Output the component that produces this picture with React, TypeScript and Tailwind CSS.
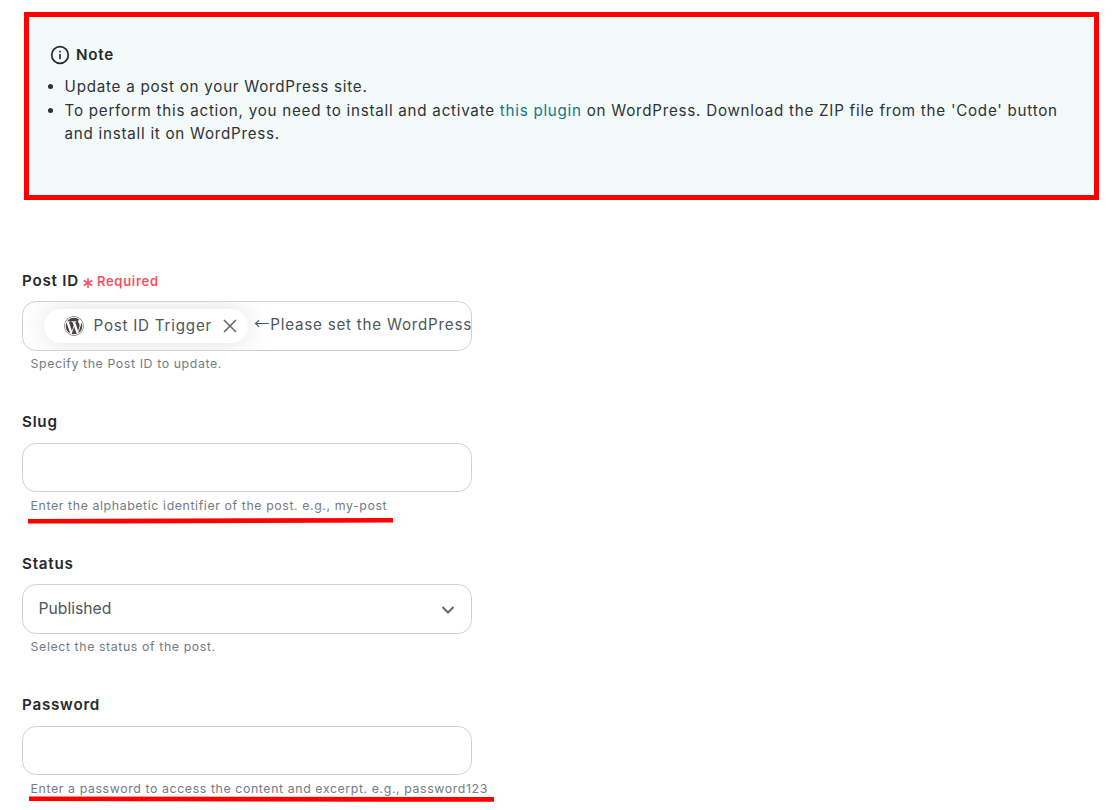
import type { ReactNode } from 'react';
import { FaWordpress } from 'react-icons/fa';

interface FieldProps {
    label: string;
    hint: string;
    required?: boolean;
    underline?: ReactNode;
    children?: ReactNode;
}

const Field: React.FC<FieldProps> = ({ label, hint, required, underline, children }) => {
    return (
        <div className="h-[141.4px]">
            <div className="flex h-6 items-center text-[15.2px] font-semibold tracking-[0.76px] text-[#27292b]">
                {label}
                {required && (
                    <span className="ml-1 flex items-center gap-1 pt-px text-[13px] tracking-[0.7px] text-[#f9515f]">
                        <svg className="mt-0.5" width="10" height="10" viewBox="0 0 10 10" stroke="currentColor" strokeWidth="1.5" aria-hidden="true">
                            <path d="M5 0v10M0.7 2.5l8.6 5M9.3 2.5l-8.6 5" />
                        </svg>
                        Required
                    </span>
                )}
            </div>
            <div className="mt-2 flex h-[49.4px] w-[450px] items-center overflow-hidden rounded-[14px] border border-[#ced2d8] bg-white text-[15.2px] text-[#50555b]">
                {children}
            </div>
            <div className="relative mt-[3.6px] w-max pl-[8.6px] text-[12.35px] leading-5 tracking-[0.595px] text-[#737b83]">
                {hint}
                {underline}
            </div>
        </div>
    );
};

const App: React.FC = () => {
    return (
        <div className="h-[810px] w-[1116px] overflow-hidden bg-white font-['Inter',sans-serif]">
            <div className="mt-3 ml-6 h-[188px] w-[1075px] border-5 border-[#ff0000] bg-white">
                <div className="h-full rounded-r-lg bg-[#f2fbfa] pt-[26px] pl-[21px] tracking-[0.737px] text-[#303234]">
                    <div className="flex h-6 items-center gap-1.5 text-[15.2px] font-semibold text-[#27292b]">
                        <svg width="20" height="20" viewBox="0 0 20 20" fill="none" stroke="currentColor" aria-hidden="true">
                            <circle cx="10" cy="10" r="8.3" strokeWidth="1.7" />
                            <path d="M10 9v5.2M10 5.8v1.6" strokeWidth="1.6" />
                        </svg>
                        Note
                    </div>
                    <ul className="mt-2 list-disc pl-[14.6px] text-[15.2px] leading-[23.6px]">
                        <li>Update a post on your WordPress site.</li>
                        <li>
                            To perform this action, you need to install and activate{' '}
                            <a className="text-[#0f768b]">this plugin</a> on WordPress. Download the ZIP file from the
                            'Code' button
                            <br />
                            and install it on WordPress.
                        </li>
                    </ul>
                </div>
            </div>

            <div className="pt-[69.35px] pl-[22px]">
                <Field label="Post ID" hint="Specify the Post ID to update." required>
                    <div className="ml-[21px] flex h-[34px] w-[204px] shrink-0 items-center rounded-full bg-white pl-[19.5px] tracking-[0.76px] shadow-[0_0_28px_rgba(0,0,0,0.12)]">
                        <FaWordpress className="size-5 shrink-0 text-[#464342]" />
                        <span className="ml-2.5 whitespace-nowrap">Post ID Trigger</span>
                        <svg className="ml-[11.5px] shrink-0" width="14" height="14" viewBox="0 0 14 14" stroke="#686868" strokeWidth="1.6" aria-hidden="true">
                            <path d="M1 1l12 12M13 1L1 13" />
                        </svg>
                    </div>
                    <span className="ml-1.5 flex h-6 items-center pb-0.5 whitespace-nowrap tracking-[0.76px]">
                        <span className="pb-[7px] font-['Noto_Sans_CJK_JP',sans-serif] leading-6">←</span>
                        <span className="ml-[0.4px]">Please set the WordPress</span>
                    </span>
                </Field>

                <Field
                    label="Slug"
                    hint="Enter the alphabetic identifier of the post. e.g., my-post"
                    underline={
                        <svg className="absolute top-[22px] left-1.5" width="366" height="6" viewBox="0 0 366 6" aria-hidden="true">
                            <path d="M0 0.9L365 0v4.6L91 5.4H0z" fill="#ff0000" />
                        </svg>
                    }
                />

                <Field label="Status" hint="Select the status of the post.">
                    <span className="ml-[15.5px] text-[15.7px]">Published</span>
                    <svg className="mt-[3px] mr-4 ml-auto" width="14" height="10" viewBox="0 0 14 10" fill="none" stroke="#686868" strokeWidth="2" aria-hidden="true">
                        <path d="M1.5 2L7 7.5L12.5 2" />
                    </svg>
                </Field>

                <Field
                    label="Password"
                    hint="Enter a password to access the content and excerpt. e.g., password123"
                    underline={
                        <svg className="absolute top-[17px] left-[7px]" width="466" height="6" viewBox="0 0 466 6" aria-hidden="true">
                            <path d="M0 0.6L465 1v4.8H349L0 5z" fill="#ff0000" />
                        </svg>
                    }
                />
            </div>
        </div>
    );
};

export default App;
